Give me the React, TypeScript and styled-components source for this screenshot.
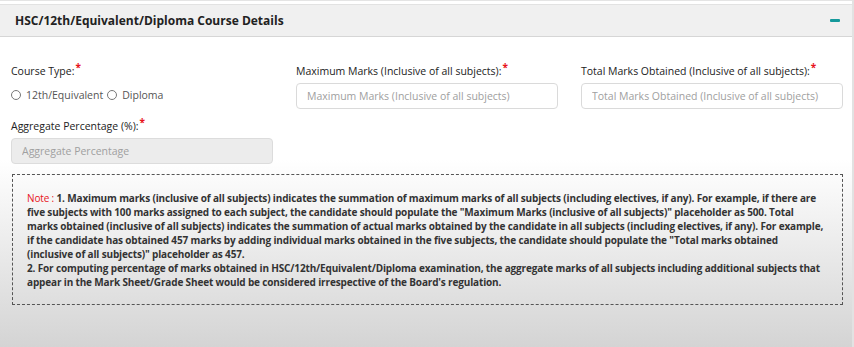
import React from 'react';
import styled, { createGlobalStyle } from 'styled-components';

const GlobalStyle = createGlobalStyle`
  html, body {
    margin: 0;
    padding: 0;
    background: #fff;
  }
  body {
    font-family: "Open Sans", "Noto Sans", sans-serif;
    color: #333;
  }
`;

const Panel = styled.div`
  width: 854px;
  height: 347px;
  box-sizing: border-box;
  padding-top: 3px;
  border-top: 1px solid #e4e4e4;
  border-right: 2px solid #e2e2e2;
  background: linear-gradient(to bottom, #fff 0%, #fff 46%, #d4d4d4 100%);
  overflow: hidden;
`;

const Header = styled.div`
  height: 33px;
  box-sizing: border-box;
  background: #f0f0f0;
  border-top: 1px solid #e2e2e2;
  border-bottom: 1px solid #d6d6d6;
  display: flex;
  align-items: center;
  justify-content: space-between;
  padding: 0 12px 0 15px;
`;

const Title = styled.h3`
  margin: 0;
  font-size: 12px;
  font-weight: 700;
  color: #222;
`;

const Collapse = styled.span`
  width: 10px;
  height: 3px;
  margin-top: -1px;
  background: #15999b;
  border-radius: 1px;
`;

const Body = styled.div`
  padding: 27px 11px 0 11px;
`;

const Grid = styled.div`
  display: grid;
  grid-template-columns: repeat(3, 262px);
  column-gap: 23px;
  row-gap: 10px;
`;

const Field = styled.div`
  display: flex;
  flex-direction: column;
`;

const Label = styled.label`
  font-size: 10.5px;
  color: #222;
  line-height: 14px;
  margin-bottom: 5px;
`;

const Req = styled.span`
  color: #e8141c;
  font-size: 10px;
  font-weight: 700;
  line-height: 0;
  position: relative;
  top: -4px;
  margin-left: 1px;
`;

const Input = styled.input<{ $disabled?: boolean }>`
  height: 26px;
  box-sizing: border-box;
  border: 1px solid ${(p) => (p.$disabled ? '#dcdcdc' : '#dadada')};
  border-radius: 4px;
  background: ${(p) => (p.$disabled ? '#ececec' : '#fff')};
  padding: 0 10px;
  font-family: inherit;
  font-size: 10.5px;
  outline: none;
  &::placeholder {
    color: #a0a0a0;
  }
`;

const Radios = styled.div`
  display: flex;
  align-items: center;
  gap: 4px;
  font-size: 10.5px;
  color: #555;
  margin-top: 5px;
`;

const RadioItem = styled.label`
  display: flex;
  align-items: center;
  gap: 5px;
`;

const Circle = styled.span`
  width: 10px;
  height: 10px;
  border: 1px solid #777;
  border-radius: 50%;
  box-sizing: border-box;
  background: #fff;
`;

const Note = styled.div`
  margin: 10px 0 0 1px;
  width: 831px;
  box-sizing: border-box;
  border: 1px dashed #555;
  padding: 16px 12px 15px 14px;
  font-size: 10px;
  letter-spacing: -0.15px;
  font-weight: 700;
  line-height: 14px;
  color: #333;
  white-space: nowrap;
`;

const NoteTag = styled.span`
  color: #e8141c;
  font-weight: 400;
`;

const App = () => {
  return (
    <Panel>
      <GlobalStyle />
      <Header>
        <Title>HSC/12th/Equivalent/Diploma Course Details</Title>
        <Collapse />
      </Header>
      <Body>
        <Grid>
          <Field>
            <Label>
              Course Type:<Req>*</Req>
            </Label>
            <Radios>
              <RadioItem>
                <Circle /> 12th/Equivalent
              </RadioItem>
              <RadioItem>
                <Circle /> Diploma
              </RadioItem>
            </Radios>
          </Field>
          <Field>
            <Label>
              Maximum Marks (Inclusive of all subjects):<Req>*</Req>
            </Label>
            <Input placeholder="Maximum Marks (Inclusive of all subjects)" />
          </Field>
          <Field>
            <Label>
              Total Marks Obtained (Inclusive of all subjects):<Req>*</Req>
            </Label>
            <Input placeholder="Total Marks Obtained (Inclusive of all subjects)" />
          </Field>
          <Field>
            <Label>
              Aggregate Percentage (%):<Req>*</Req>
            </Label>
            <Input $disabled disabled placeholder="Aggregate Percentage" />
          </Field>
        </Grid>
        <Note>
          <NoteTag>Note : </NoteTag>
          1. Maximum marks (inclusive of all subjects) indicates the summation of maximum marks of all
          subjects (including electives, if any). For example, if there are
          <br />
          five subjects with 100 marks assigned to each subject, the candidate should populate the
          "Maximum Marks (inclusive of all subjects)" placeholder as 500. Total
          <br />
          marks obtained (inclusive of all subjects) indicates the summation of actual marks obtained by
          the candidate in all subjects (including electives, if any). For example,
          <br />
          if the candidate has obtained 457 marks by adding individual marks obtained in the five
          subjects, the candidate should populate the "Total marks obtained
          <br />
          (inclusive of all subjects)" placeholder as 457.
          <br />
          2. For computing percentage of marks obtained in HSC/12th/Equivalent/Diploma examination, the
          aggregate marks of all subjects including additional subjects that
          <br />
          appear in the Mark Sheet/Grade Sheet would be considered irrespective of the Board's
          regulation.
        </Note>
      </Body>
    </Panel>
  );
};

export default App;
